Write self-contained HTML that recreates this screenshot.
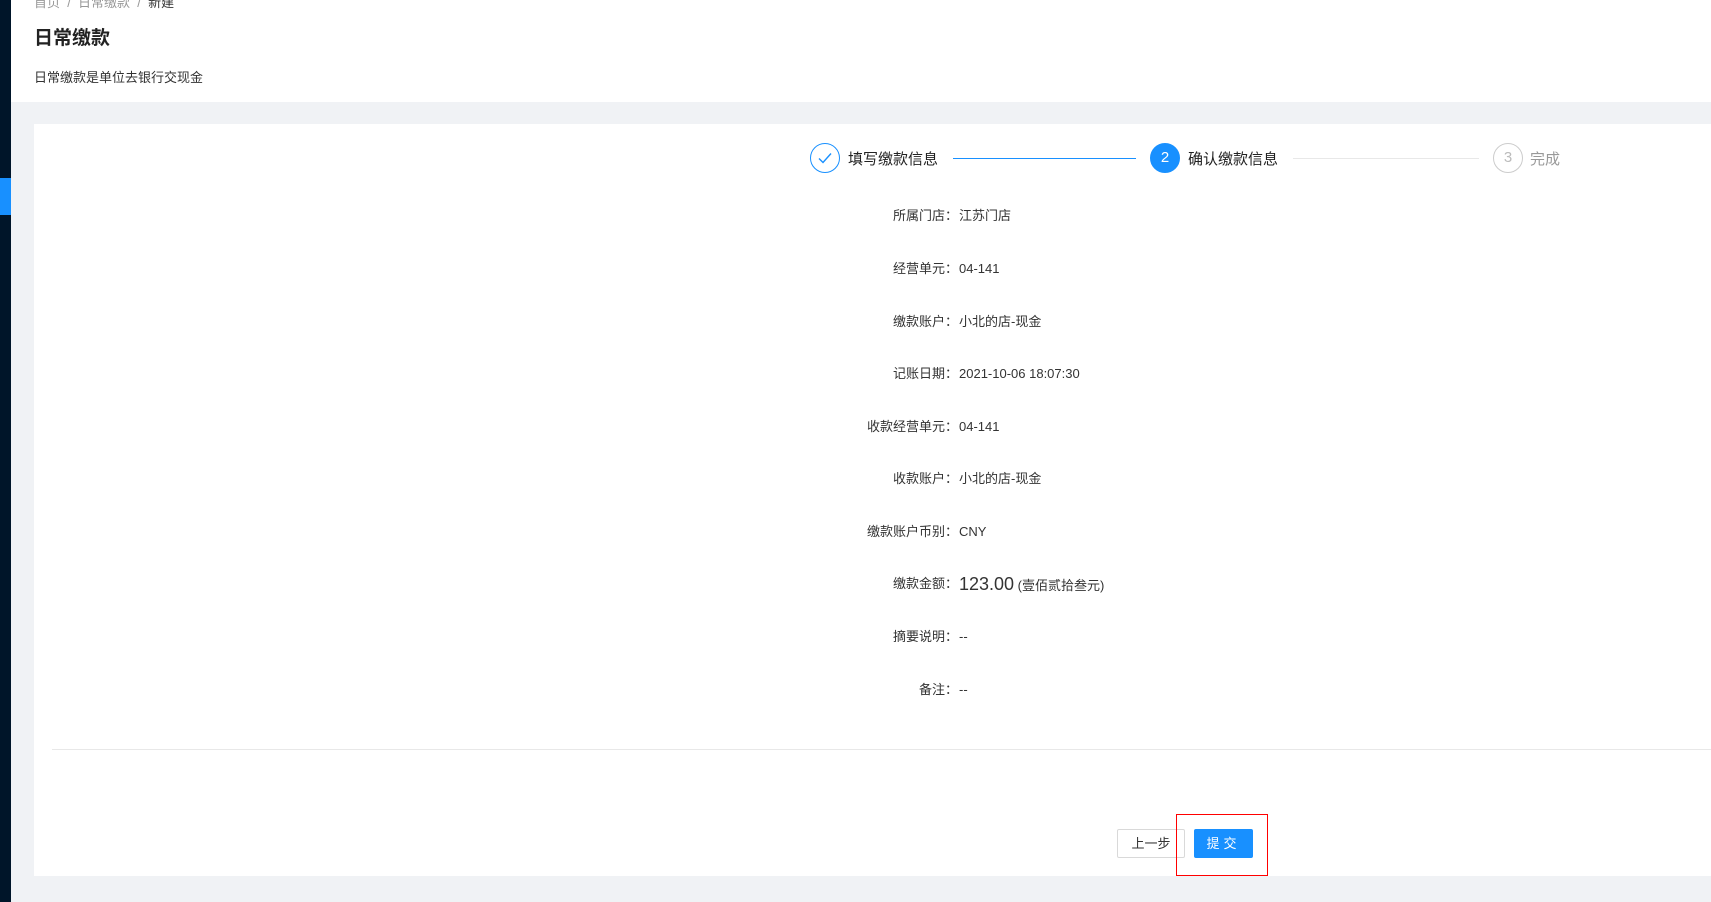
<!DOCTYPE html>
<html><head><meta charset="utf-8"><style>
*{margin:0;padding:0;box-sizing:border-box}
body{width:1711px;height:902px;overflow:hidden;background:#f0f2f5;font-family:"Liberation Sans","Noto Sans CJK SC",sans-serif;color:#333;position:relative}
.side{position:absolute;left:0;top:0;width:11px;height:902px;background:#001529}
.side i{position:absolute;left:0;top:178px;width:11px;height:37px;background:#1890ff}
.head{position:absolute;left:11px;top:0;right:0;height:102px;background:#fff}
.bc{position:absolute;left:23px;top:-8px;font-size:13px;color:#999}
.bc b{font-weight:normal;color:#333}
h1{position:absolute;left:34px;top:23px;font-size:19px;font-weight:bold;color:#222}
.sub{position:absolute;left:34px;top:67px;font-size:13px;color:#333}
.card{position:absolute;left:34px;top:124px;right:0;height:752px;background:#fff}
.c{position:absolute;width:30px;height:30px;border-radius:50%;top:143px;text-align:center;line-height:28px;font-size:15px}
.st{position:absolute;top:150px;font-size:15px;line-height:20px;color:#222}
.ln{position:absolute;top:158px;height:1px}
.row{position:absolute;left:700px;width:700px;font-size:13px;line-height:18px;height:18px;color:#333}
.row .l{position:absolute;right:442px;white-space:nowrap}
.row .v{position:absolute;left:259px;white-space:nowrap}
.hr{position:absolute;left:52px;right:0;top:749px;height:1px;background:#e8e8e8}
.btn{position:absolute;top:829px;height:29px;font-size:13px;line-height:27px;text-align:center;border-radius:2px}
</style></head><body>
<div class="side"><i></i></div>
<div class="head">
<div class="bc">首页 &nbsp;/&nbsp; 日常缴款 &nbsp;/&nbsp; <b>新建</b></div>
</div>
<h1>日常缴款</h1>
<div class="sub">日常缴款是单位去银行交现金</div>
<div class="card"></div>
<div class="c" style="left:810px;border:1px solid #1890ff;color:#1890ff"><svg width="16" height="16" viewBox="0 0 16 16" style="margin-top:6px"><path d="M2 8.5l4 4 8-9" fill="none" stroke="#1890ff" stroke-width="1.4"/></svg></div>
<div class="st" style="left:848px">填写缴款信息</div>
<div class="ln" style="left:953px;width:183px;background:#1890ff"></div>
<div class="c" style="left:1150px;background:#1890ff;color:#fff;border:1px solid #1890ff">2</div>
<div class="st" style="left:1188px">确认缴款信息</div>
<div class="ln" style="left:1293px;width:186px;background:#e8e8e8"></div>
<div class="c" style="left:1493px;border:1px solid #ccc;color:#bbb">3</div>
<div class="st" style="left:1530px;color:#999">完成</div>

<div class="row" style="top:207px"><span class="l">所属门店：</span><span class="v">江苏门店</span></div>
<div class="row" style="top:260px"><span class="l">经营单元：</span><span class="v">04-141</span></div>
<div class="row" style="top:313px"><span class="l">缴款账户：</span><span class="v">小北的店-现金</span></div>
<div class="row" style="top:365px"><span class="l">记账日期：</span><span class="v">2021-10-06 18:07:30</span></div>
<div class="row" style="top:418px"><span class="l">收款经营单元：</span><span class="v">04-141</span></div>
<div class="row" style="top:470px"><span class="l">收款账户：</span><span class="v">小北的店-现金</span></div>
<div class="row" style="top:523px"><span class="l">缴款账户币别：</span><span class="v">CNY</span></div>
<div class="row" style="top:575px"><span class="l">缴款金额：</span><span class="v"><span style="font-size:18px">123.00</span> (壹佰贰拾叁元)</span></div>
<div class="row" style="top:628px"><span class="l">摘要说明：</span><span class="v">--</span></div>
<div class="row" style="top:681px"><span class="l">备注：</span><span class="v">--</span></div>
<div class="hr"></div>
<div class="btn" style="left:1117px;width:68px;border:1px solid #d9d9d9;color:#333;background:#fff">上一步</div>
<div class="btn" style="left:1194px;width:59px;background:#1890ff;color:#fff;letter-spacing:4px;border:1px solid #1890ff">提交</div>
<div style="position:absolute;left:1176px;top:814px;width:92px;height:62px;border:1px solid #f00"></div>
</body></html>
